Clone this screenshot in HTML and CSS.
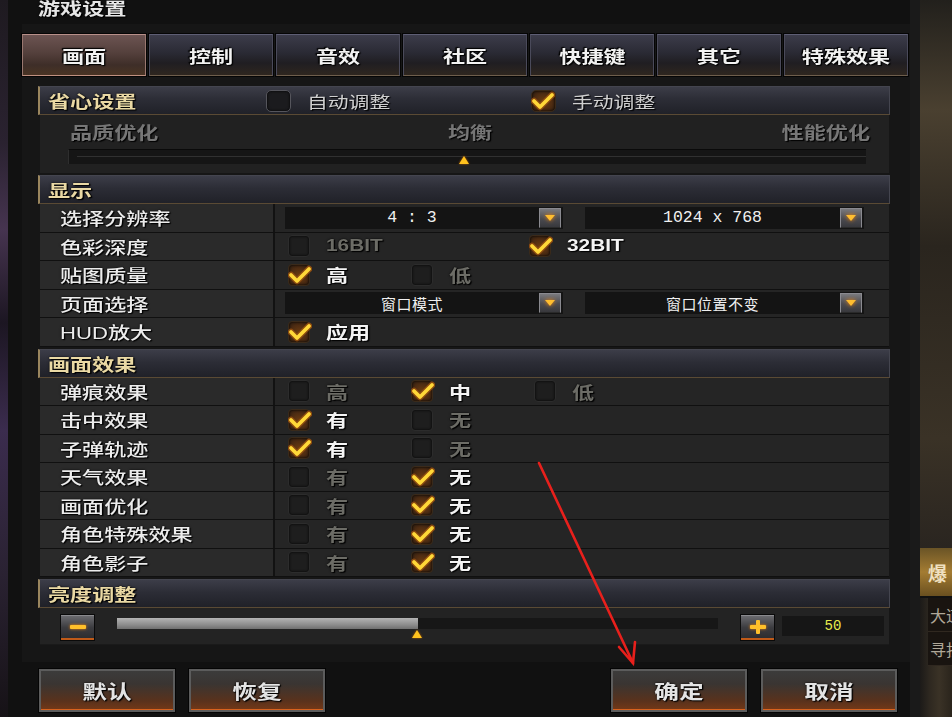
FILE: index.html
```html
<!DOCTYPE html>
<html lang="zh">
<head>
<meta charset="utf-8">
<title>游戏设置</title>
<link rel="stylesheet" href="styles.css">
</head>
<body>
<svg width="0" height="0" class="defs">
  <symbol id="chk" viewBox="0 0 24 22">
    <path d="M3 11 L9 17 L21 5" fill="none" stroke="#8a4a10" stroke-width="6.5" stroke-linecap="round" stroke-linejoin="round"/>
    <path d="M3 11 L9 17 L21 5" fill="none" stroke="#ffd838" stroke-width="3.8" stroke-linecap="round" stroke-linejoin="round"/>
  </symbol>
</svg>
<div class="bg-left"></div>
<div class="window">
  <div class="title"><span class="t">游戏设置</span></div>
  <div class="panel">
    <div class="tabs">
      <div class="tab active"><span class="t tc">画面</span></div>
      <div class="tab"><span class="t tc">控制</span></div>
      <div class="tab"><span class="t tc">音效</span></div>
      <div class="tab"><span class="t tc">社区</span></div>
      <div class="tab"><span class="t tc">快捷键</span></div>
      <div class="tab"><span class="t tc">其它</span></div>
      <div class="tab"><span class="t tc">特殊效果</span></div>
    </div>
    <div class="content">
      <div class="sec-head easy">
        <span class="sec-title w-easy"><span class="t">省心设置</span></span>
        <span class="hopt"><span class="cb big"></span><span class="t">自动调整</span></span>
        <span class="hopt"><span class="cb big on"><svg><use href="#chk"/></svg></span><span class="t">手动调整</span></span>
      </div>
      <div class="quality">
        <div class="q-labels"><span class="t">品质优化</span><span class="t tc">均衡</span><span class="t tr">性能优化</span></div>
        <div class="q-track"><span class="tri q-tri"></span></div>
      </div>

      <div class="sec-head"><span class="sec-title"><span class="t">显示</span></span></div>
      <div class="row">
        <div class="lbl"><span class="t">选择分辨率</span></div>
        <div class="val dds">
          <div class="dd"><span class="dd-text mono">4 : 3</span><span class="dd-btn"><i></i></span></div>
          <div class="dd dd2"><span class="dd-text mono">1024 x 768</span><span class="dd-btn"><i></i></span></div>
        </div>
      </div>
      <div class="row">
        <div class="lbl"><span class="t">色彩深度</span></div>
        <div class="val">
          <span class="opt wide off"><span class="cb"></span><span class="t lat">16BIT</span></span>
          <span class="opt wide"><span class="cb on"><svg><use href="#chk"/></svg></span><span class="t lat">32BIT</span></span>
        </div>
      </div>
      <div class="row">
        <div class="lbl"><span class="t">贴图质量</span></div>
        <div class="val">
          <span class="opt"><span class="cb on"><svg><use href="#chk"/></svg></span><span class="t">高</span></span>
          <span class="opt off"><span class="cb"></span><span class="t">低</span></span>
        </div>
      </div>
      <div class="row">
        <div class="lbl"><span class="t">页面选择</span></div>
        <div class="val dds">
          <div class="dd"><span class="dd-text">窗口模式</span><span class="dd-btn"><i></i></span></div>
          <div class="dd dd2"><span class="dd-text">窗口位置不变</span><span class="dd-btn"><i></i></span></div>
        </div>
      </div>
      <div class="row">
        <div class="lbl"><span class="t"><span class="lat">HUD</span>放大</span></div>
        <div class="val">
          <span class="opt"><span class="cb on"><svg><use href="#chk"/></svg></span><span class="t">应用</span></span>
        </div>
      </div>

      <div class="sec-head"><span class="sec-title"><span class="t">画面效果</span></span></div>
      <div class="row r2">
        <div class="lbl"><span class="t">弹痕效果</span></div>
        <div class="val">
          <span class="opt off"><span class="cb"></span><span class="t">高</span></span>
          <span class="opt"><span class="cb on"><svg><use href="#chk"/></svg></span><span class="t">中</span></span>
          <span class="opt off"><span class="cb"></span><span class="t">低</span></span>
        </div>
      </div>
      <div class="row r2">
        <div class="lbl"><span class="t">击中效果</span></div>
        <div class="val">
          <span class="opt"><span class="cb on"><svg><use href="#chk"/></svg></span><span class="t">有</span></span>
          <span class="opt off"><span class="cb"></span><span class="t">无</span></span>
        </div>
      </div>
      <div class="row r2">
        <div class="lbl"><span class="t">子弹轨迹</span></div>
        <div class="val">
          <span class="opt"><span class="cb on"><svg><use href="#chk"/></svg></span><span class="t">有</span></span>
          <span class="opt off"><span class="cb"></span><span class="t">无</span></span>
        </div>
      </div>
      <div class="row r2">
        <div class="lbl"><span class="t">天气效果</span></div>
        <div class="val">
          <span class="opt off"><span class="cb"></span><span class="t">有</span></span>
          <span class="opt"><span class="cb on"><svg><use href="#chk"/></svg></span><span class="t">无</span></span>
        </div>
      </div>
      <div class="row r2">
        <div class="lbl"><span class="t">画面优化</span></div>
        <div class="val">
          <span class="opt off"><span class="cb"></span><span class="t">有</span></span>
          <span class="opt"><span class="cb on"><svg><use href="#chk"/></svg></span><span class="t">无</span></span>
        </div>
      </div>
      <div class="row r2">
        <div class="lbl"><span class="t">角色特殊效果</span></div>
        <div class="val">
          <span class="opt off"><span class="cb"></span><span class="t">有</span></span>
          <span class="opt"><span class="cb on"><svg><use href="#chk"/></svg></span><span class="t">无</span></span>
        </div>
      </div>
      <div class="row r2">
        <div class="lbl"><span class="t">角色影子</span></div>
        <div class="val">
          <span class="opt off"><span class="cb"></span><span class="t">有</span></span>
          <span class="opt"><span class="cb on"><svg><use href="#chk"/></svg></span><span class="t">无</span></span>
        </div>
      </div>

      <div class="sec-head bright-head"><span class="sec-title"><span class="t">亮度调整</span></span></div>
      <div class="bright">
        <span class="sbtn minus"><i></i></span>
        <div class="b-track"><div class="b-fill" style="width:50%"></div><span class="tri b-tri"></span></div>
        <span class="sbtn plus"><i></i><b></b></span>
        <span class="b-val mono">50</span>
      </div>
    </div>
  </div>
  <div class="buttons">
    <div class="btn"><span class="t tc">默认</span></div>
    <div class="btn"><span class="t tc">恢复</span></div>
    <div class="spacer"></div>
    <div class="btn"><span class="t tc">确定</span></div>
    <div class="btn"><span class="t tc">取消</span></div>
  </div>
</div>
<div class="bg-right">
  <div class="br-top"></div>
  <div class="br-badge">爆</div>
  <div class="br-txt">大道</div>
  <div class="br-txt">寻找</div>
</div>
<svg class="arrow" width="952" height="717" viewBox="0 0 952 717">
  <g stroke="#e8201c" stroke-width="2.6" stroke-linecap="round" fill="none">
    <path d="M539 463 L633 663"/>
    <path d="M619 647 L633 663 L635 642"/>
  </g>
</svg>
</body>
</html>
```

FILE: styles.css
```css
* { box-sizing: border-box; margin: 0; padding: 0; }
html, body { width: 952px; height: 717px; overflow: hidden; }
body {
  background: #0d0d0d;
  font-family: "Noto Sans CJK SC", "Noto Sans", sans-serif;
  color: #ddd;
  display: flex;
  position: relative;
}
.defs { position: absolute; }
.mono { font-family: "Liberation Mono", "DejaVu Sans Mono", monospace; }
.lat { font-family: "Liberation Sans", "Noto Sans CJK SC", sans-serif; font-weight: 700; }

.t {
  display: inline-block;
  white-space: nowrap;
  transform: scaleX(1.3);
  transform-origin: 0 50%;
}
.tc { transform-origin: 50% 50%; }
.tr { transform-origin: 100% 50%; }

.bg-left {
  width: 8px;
  background: linear-gradient(#1e1a20 0%, #2a2230 20%, #463450 32%, #1c1622 45%, #3b2c4e 60%, #2a2232 80%, #161216 100%);
}
.window {
  width: 912px;
  height: 717px;
  background: #111;
  border-right: 10px solid #1a1a1a;
  display: flex;
  flex-direction: column;
}
.title {
  height: 25px;
  padding-left: 30px;
  font-size: 17px;
  line-height: 18px;
  font-weight: 700;
  color: #e6e6e6;
  margin-top: -1px;
  text-shadow: 0 0 2px #000, 1px 1px 1px #000;
}
.panel {
  margin-left: 14px;
  width: 888px;
  height: 638px;
  background: #161616;
  padding-top: 10px;
}
.tabs { display: flex; gap: 3px; height: 42px; }
.tab {
  width: 124px;
  height: 42px;
  border: 1px solid;
  border-color: #5e5e74 #4a4a5a #6e5e4c #4a4a5a;
  background: linear-gradient(#3c3c4a 0%, #2a2a34 45%, #201e22 70%, #2e261f 100%);
  box-shadow: 0 0 0 1px #050505;
  display: flex;
  align-items: center;
  justify-content: center;
  font-size: 17px;
  font-weight: 700;
  color: #f2f2f2;
  text-shadow: 0 0 2px #000, 1px 1px 1px #000, -1px -1px 1px #000;
}
.tab.active {
  border-color: #b8908a #9a7870 #c09080 #9a7870;
  background: linear-gradient(#6c5452 0%, #54403c 45%, #3e2e28 75%, #4a3424 100%);
}
.content {
  margin: 10px 20px 0 16px;
  display: flex;
  flex-direction: column;
}
.sec-head {
  height: 29px;
  border: 1px solid #44454f;
  border-left: 2px solid #9a865e;
  border-bottom-color: #5a4a34;
  background: linear-gradient(#3c3d48 0%, #2c2d36 45%, #202128 100%);
  display: flex;
  align-items: center;
  padding-left: 8px;
  margin-top: 2px;
}
.sec-head:first-child { margin-top: 0; }
.sec-title {
  font-size: 17px;
  font-weight: 700;
  color: #ead9a4;
  text-shadow: 0 0 2px #000, 1px 1px 1px #000;
}
.w-easy { width: 218px; }
.hopt {
  width: 265px;
  display: flex;
  align-items: center;
  gap: 16px;
  font-size: 16px;
  color: #cfcfcf;
  text-shadow: 1px 1px 1px #000;
}
.quality {
  height: 58px;
  margin: 0 1px 0 2px;
  background: #212121;
  padding-top: 7px;
}
.q-labels {
  display: flex;
  justify-content: space-between;
  padding: 0 19px 0 30px;
  font-size: 17px;
  font-weight: 700;
  line-height: 20px;
  color: #767676;
  text-shadow: 1px 1px 1px #000;
}
.q-track {
  position: relative;
  height: 15px;
  margin: 7px 23px 0 28px;
  background: #151515;
  border-top: 1px solid #0a0a0a;
  border-left: 1px solid #2e2e2e;
}
.q-track::before {
  content: "";
  position: absolute;
  left: 8px; right: 0; top: 6px;
  height: 1px;
  background: #303030;
}
.tri {
  position: absolute;
  width: 0; height: 0;
  border-left: 5px solid transparent;
  border-right: 5px solid transparent;
  border-bottom: 8px solid #ffc21e;
  filter: drop-shadow(0 0 1px #b05a00);
}
.q-tri { left: 390px; top: 6px; }

.row {
  height: 28.5px;
  margin: 0 1px 0 2px;
  display: grid;
  grid-template-columns: 235px 1fr;
  border-bottom: 1px solid #101010;
}
.lbl {
  background: #2a2a2a;
  border-right: 2px solid #121212;
  padding-left: 20px;
  display: flex;
  align-items: center;
  font-size: 17px;
  font-weight: 500;
  color: #ececec;
  text-shadow: 0 0 2px #000, 1px 1px 1px #000;
}
.lbl .lat { font-weight: 400; }
.val {
  background: #252525;
  display: flex;
  align-items: center;
  padding-left: 13px;
}
.opt {
  width: 123px;
  display: flex;
  align-items: center;
  gap: 16px;
  font-size: 17px;
  font-weight: 700;
  color: #f4f4f4;
  text-shadow: 0 0 2px #000, 1px 1px 1px #000;
}
.opt.wide { width: 241px; }
.opt .lat { font-size: 16px; }
.opt.off { color: #6c6c66; }
.cb {
  width: 22px;
  height: 22px;
  flex: none;
  border-radius: 4px;
  background: #1e1e1e;
  border: 1px solid #2c2c2c;
  box-shadow: inset 0 0 3px #000;
  position: relative;
}
.cb.big { width: 25px; height: 22px; border-color: #55555c; background: #1b1b1e; border-radius: 5px; }
.cb.on {
  background: radial-gradient(circle at 50% 55%, #6e3c10 0%, #4a2a12 60%, #2e1e12 100%);
  border-color: #3a2a1a;
}
.cb svg {
  position: absolute;
  left: -1px; top: -1px;
  width: 24px; height: 22px;
  overflow: visible;
}
.dds { padding-left: 10px; gap: 22px; }
.dd {
  width: 278px;
  height: 22px;
  background: #141414;
  position: relative;
  display: flex;
  align-items: center;
  justify-content: center;
  padding-right: 24px;
}
.dd2 { width: 279px; }
.dd-text {
  font-size: 15px;
  color: #f0f0f0;
  letter-spacing: 0.5px;
  white-space: pre;
}
.dd-text.mono { font-size: 16.5px; letter-spacing: 0; }
.dd-btn {
  position: absolute;
  right: 2px; top: 1px;
  width: 22px; height: 20px;
  background: linear-gradient(#7a7a7e, #4a4a50 55%, #38383c);
  border: 1px solid #8a8a90;
  border-bottom-color: #2a2a2a;
  display: flex;
  align-items: center;
  justify-content: center;
}
.dd-btn i {
  width: 0; height: 0;
  border-left: 5px solid transparent;
  border-right: 5px solid transparent;
  border-top: 6px solid #ffbe30;
  filter: drop-shadow(0 0 2px #ff8a00);
}
.bright {
  height: 37px;
  margin: 0 1px 0 2px;
  background: #232323;
  display: flex;
  align-items: center;
  padding-left: 20px;
  position: relative;
  border-bottom: 1px solid #1a1a1a;
}
.sbtn {
  width: 35px;
  height: 27px;
  flex: none;
  background: linear-gradient(#6e6e72, #3c3c40 50%, #2a2a2c);
  border: 1px solid #0a0a0a;
  box-shadow: inset 0 1px 0 #8a8a8e, inset 0 -2px 0 #c05a18;
  position: relative;
  display: flex;
  align-items: center;
  justify-content: center;
  margin-top: 2px;
}
.sbtn i {
  width: 16px; height: 4px;
  background: #ffc02a;
  border-radius: 1px;
  box-shadow: 0 0 3px #ff8a00;
}
.sbtn.plus b {
  position: absolute;
  width: 4px; height: 14px;
  background: #ffc02a;
  border-radius: 1px;
  left: 15px; top: 5px;
}
.b-track {
  margin-left: 22px;
  width: 601px;
  height: 11px;
  background: #171717;
  position: relative;
  margin-top: -6px;
}
.b-fill {
  height: 11px;
  background: linear-gradient(#b4b4b4, #8e8e8e 60%, #707070);
}
.b-tri { left: 295px; top: 12px; }
.plus { margin-left: 22px; }
.b-val {
  margin-left: 7px;
  width: 102px;
  height: 20px;
  background: #161616;
  color: #e8ec4c;
  font-size: 14px;
  display: flex;
  align-items: center;
  justify-content: center;
}
.buttons {
  display: flex;
  gap: 12px;
  padding-left: 30px;
  margin-top: 6px;
}
.spacer { width: 260px; }
.btn {
  width: 138px;
  height: 45px;
  border: 1px solid #050505;
  box-shadow: inset 0 0 0 2px #5c5c5c, inset 0 -3px 0 #d8621e;
  background: linear-gradient(#3c3c3c 0%, #3a3532 35%, #5a321c 75%, #7a3a16 100%);
  display: flex;
  align-items: center;
  justify-content: center;
  font-size: 19px;
  font-weight: 700;
  color: #e4e4e4;
  text-shadow: 0 0 2px #000, 1px 1px 1px #000;
}
.bg-right {
  flex: 1;
  background: linear-gradient(90deg, #1c1a18 0%, #2e2820 30%, #3a3226 60%, #2a241c 100%);
  display: flex;
  flex-direction: column;
  overflow: hidden;
}
.br-top { height: 548px; flex: none; background: linear-gradient(#22201c, #4a4030 20%, #2a251e 45%, #3a3226 80%, #2a2520); }
.br-badge {
  height: 50px;
  flex: none;
  background: linear-gradient(#6a5426, #a47c32 50%, #6a5020);
  color: #f0e0c0;
  font-size: 19px;
  font-weight: 700;
  padding-left: 8px;
  line-height: 50px;
  border-bottom: 2px solid #111;
  white-space: nowrap;
}
.br-txt {
  height: 34px;
  flex: none;
  color: #b0a898;
  font-size: 16px;
  line-height: 34px;
  background: #191410;
  border-bottom: 1px solid #302820;
  margin-left: 8px;
  padding-left: 2px;
  white-space: nowrap;
}
.arrow {
  position: absolute;
  left: 0; top: 0;
  pointer-events: none;
}
```
